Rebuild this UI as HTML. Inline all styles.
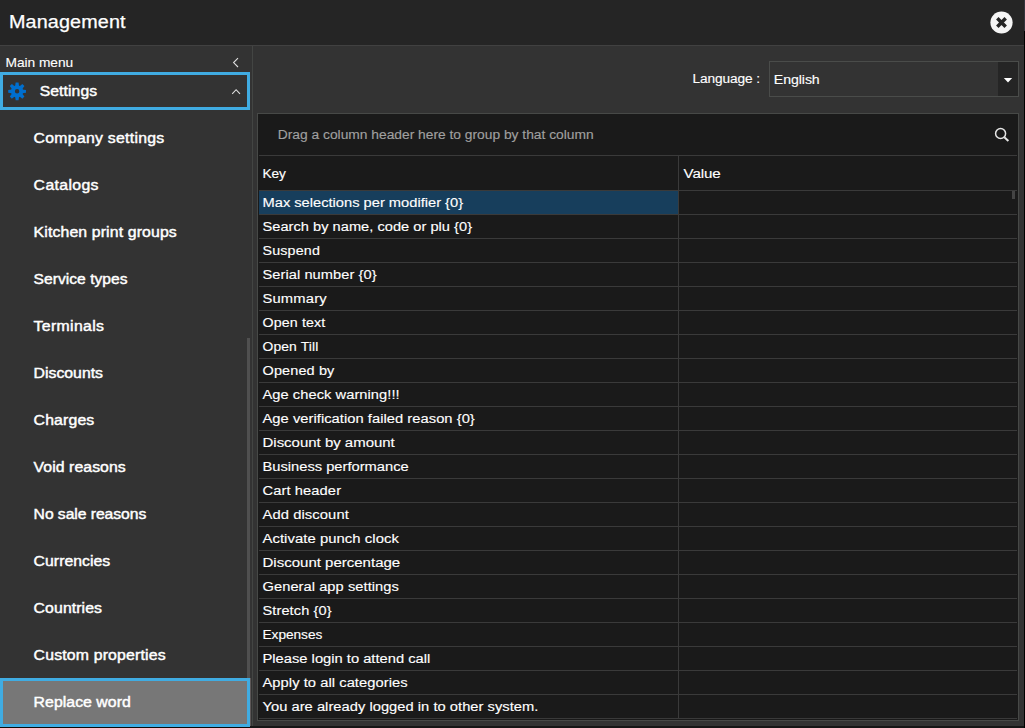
<!DOCTYPE html>
<html lang="en">
<head>
<meta charset="utf-8">
<title>Management</title>
<style>
html,body{margin:0;padding:0;}
body{width:1025px;height:728px;overflow:hidden;background:#333333;position:relative;font-family:"Liberation Sans",sans-serif;}
.abs{position:absolute;}
.t{position:absolute;white-space:nowrap;line-height:20px;height:20px;transform-origin:0 50%;}
#hdr{position:absolute;left:0;top:0;width:1025px;height:45px;background:#252525;}
#hdrline{position:absolute;left:0;top:45px;width:1025px;height:1px;background:#414141;}
#sideline{position:absolute;left:252px;top:46px;width:1px;height:680px;background:#434543;}
#thumb{position:absolute;left:247px;top:338px;width:3px;height:340px;background:#505050;}
#setbox{position:absolute;left:0;top:72px;width:250px;height:38px;box-sizing:border-box;border:3px solid #40ace2;}
#selbox{position:absolute;left:0;top:678px;width:250px;height:49px;box-sizing:border-box;border:3px solid #40ace2;background:#777777;}
#selx{position:absolute;left:250px;top:678px;width:1px;height:48px;background:#5c5757;}
#dd{position:absolute;left:769px;top:61px;width:250px;height:36px;box-sizing:border-box;border:1px solid #4a4c4a;}
#ddbtn{position:absolute;left:998px;top:62px;width:20px;height:34px;background:#252525;}
#grid{position:absolute;left:257px;top:113px;width:762px;height:608px;box-sizing:border-box;border:1px solid #474947;background:#1a1a1a;}
.hl{position:absolute;left:259px;width:758px;height:1px;background:#3a3a3a;}
#vl{position:absolute;left:678px;top:156px;width:1px;height:562px;background:#3a3a3a;}
#selrow{position:absolute;left:259px;top:191px;width:419px;height:23px;background:#173e5c;}
#gthumb{position:absolute;left:1012px;top:191px;width:3px;height:8px;background:#444444;}
#rstrip{position:absolute;left:1024px;top:0;width:1px;height:728px;background:#000;}
#rstrip2{position:absolute;left:1024px;top:0;width:1px;height:31px;background:#34343c;}
#bstrip{position:absolute;left:0;top:726px;width:1025px;height:2px;background:#161616;}
#bstrip2{position:absolute;left:0;top:727px;width:250px;height:1px;background:#120a06;}
svg{position:absolute;overflow:visible;}
</style>
</head>
<body>
<header>
<div id="hdr"></div>
<div id="hdrline"></div>
<!-- close button -->
<svg style="left:990px;top:11.2px" width="23" height="23" viewBox="0 0 23 23">
  <circle cx="11.5" cy="11.5" r="11.1" fill="#f5f5f5"/>
  <path d="M7.3 7.3 L15.7 15.7 M15.7 7.3 L7.3 15.7" stroke="#252525" stroke-width="3.5" fill="none"/>
</svg>
<div class="t" style="left:8px;top:12.14px;font-size:17.5px;font-weight:400;color:#fff;letter-spacing:0.113px;transform:translateX(0.97px) scaleX(1.1300);-webkit-text-stroke:0.25px #fff;">Management</div>
</header>

<div id="bstrip"></div>
<div id="bstrip2"></div>

<aside>
<div id="sideline"></div>
<div id="thumb"></div>
<div id="setbox"></div>
<div id="selbox"></div>
<div id="selx"></div>
<!-- gear -->
<svg style="left:7px;top:81px" width="20" height="20" viewBox="-10 -10 20 20">
  <g transform="translate(0.1 0.35) scale(0.975)">
  <g fill="#006fce">
    <polygon points="-2,-5.2 -1.5,-9.1 1.5,-9.1 2,-5.2" transform="rotate(0)"/>
    <polygon points="-2,-5.2 -1.5,-9.1 1.5,-9.1 2,-5.2" transform="rotate(45)"/>
    <polygon points="-2,-5.2 -1.5,-9.1 1.5,-9.1 2,-5.2" transform="rotate(90)"/>
    <polygon points="-2,-5.2 -1.5,-9.1 1.5,-9.1 2,-5.2" transform="rotate(135)"/>
    <polygon points="-2,-5.2 -1.5,-9.1 1.5,-9.1 2,-5.2" transform="rotate(180)"/>
    <polygon points="-2,-5.2 -1.5,-9.1 1.5,-9.1 2,-5.2" transform="rotate(225)"/>
    <polygon points="-2,-5.2 -1.5,-9.1 1.5,-9.1 2,-5.2" transform="rotate(270)"/>
    <polygon points="-2,-5.2 -1.5,-9.1 1.5,-9.1 2,-5.2" transform="rotate(315)"/>
  </g>
  <circle cx="0" cy="0" r="4.3" fill="none" stroke="#006fce" stroke-width="4"/>
  </g>
</svg>

<!-- chevrons -->
<svg style="left:230px;top:55px" width="12" height="14" viewBox="0 0 12 14">
  <path d="M8 3.2 L3.6 7.6 L8 12" stroke="#e0e0e0" stroke-width="1.1" fill="none"/>
</svg>
<svg style="left:230px;top:86px" width="12" height="12" viewBox="0 0 12 12">
  <path d="M2.2 7.9 L6.1 3.7 L10 7.9" stroke="#e0e0e0" stroke-width="1.1" fill="none"/>
</svg>

<div class="t" style="left:5px;top:52.90px;font-size:12.4px;font-weight:400;color:#fff;letter-spacing:-0.034px;transform:translateX(0.49px) scaleX(1.1092);-webkit-text-stroke:0.1px #fff;">Main menu</div>
<div class="t" style="left:39px;top:80.75px;font-size:14px;font-weight:400;color:#fff;letter-spacing:0.089px;transform:translateX(0.70px) scaleX(1.1209);-webkit-text-stroke:0.42px #fff;">Settings</div>
<div class="t" style="left:33px;top:128.40px;font-size:14px;font-weight:400;color:#fff;letter-spacing:0.238px;transform:translateX(0.60px) scaleX(1.1300);-webkit-text-stroke:0.42px #fff;">Company settings</div>
<div class="t" style="left:33px;top:175.40px;font-size:14px;font-weight:400;color:#fff;letter-spacing:0.311px;transform:translateX(0.60px) scaleX(1.1300);-webkit-text-stroke:0.42px #fff;">Catalogs</div>
<div class="t" style="left:33px;top:222.40px;font-size:14px;font-weight:400;color:#fff;letter-spacing:0.114px;transform:translateX(0.60px) scaleX(1.1300);-webkit-text-stroke:0.42px #fff;">Kitchen print groups</div>
<div class="t" style="left:33px;top:269.40px;font-size:14px;font-weight:400;color:#fff;letter-spacing:0.030px;transform:translateX(0.60px) scaleX(1.1126);-webkit-text-stroke:0.42px #fff;">Service types</div>
<div class="t" style="left:33px;top:316.40px;font-size:14px;font-weight:400;color:#fff;letter-spacing:0.300px;transform:translateX(0.60px) scaleX(1.1300);-webkit-text-stroke:0.42px #fff;">Terminals</div>
<div class="t" style="left:33px;top:363.40px;font-size:14px;font-weight:400;color:#fff;letter-spacing:-0.007px;transform:translateX(0.60px) scaleX(1.1300);-webkit-text-stroke:0.42px #fff;">Discounts</div>
<div class="t" style="left:33px;top:410.40px;font-size:14px;font-weight:400;color:#fff;letter-spacing:0.126px;transform:translateX(0.60px) scaleX(1.1300);-webkit-text-stroke:0.42px #fff;">Charges</div>
<div class="t" style="left:33px;top:457.40px;font-size:14px;font-weight:400;color:#fff;letter-spacing:0.055px;transform:translateX(0.60px) scaleX(1.1300);-webkit-text-stroke:0.42px #fff;">Void reasons</div>
<div class="t" style="left:33px;top:504.40px;font-size:14px;font-weight:400;color:#fff;letter-spacing:-0.046px;transform:translateX(0.60px) scaleX(1.1207);-webkit-text-stroke:0.42px #fff;">No sale reasons</div>
<div class="t" style="left:33px;top:551.40px;font-size:14px;font-weight:400;color:#fff;letter-spacing:0.039px;transform:translateX(0.60px) scaleX(1.1265);-webkit-text-stroke:0.42px #fff;">Currencies</div>
<div class="t" style="left:33px;top:598.40px;font-size:14px;font-weight:400;color:#fff;letter-spacing:0.077px;transform:translateX(0.60px) scaleX(1.1300);-webkit-text-stroke:0.42px #fff;">Countries</div>
<div class="t" style="left:33px;top:645.40px;font-size:14px;font-weight:400;color:#fff;letter-spacing:0.152px;transform:translateX(0.60px) scaleX(1.1300);-webkit-text-stroke:0.42px #fff;">Custom properties</div>
<div class="t" style="left:33px;top:692.40px;font-size:14px;font-weight:400;color:#fff;letter-spacing:0.037px;transform:translateX(0.60px) scaleX(1.1300);-webkit-text-stroke:0.42px #fff;">Replace word</div>
</aside>

<main>
<div id="dd"></div>
<div id="ddbtn"></div>
<!-- dropdown arrow -->
<svg style="left:1003px;top:77px" width="10" height="7" viewBox="0 0 10 7">
  <path d="M0.8 1 L9.2 1 L5 5.6 Z" fill="#ffffff"/>
</svg>

<div id="grid"></div>
<div class="hl" style="top:155px"></div>
<div class="hl" style="top:190px"></div>
<div class="hl" style="top:214px"></div>
<div class="hl" style="top:238px"></div>
<div class="hl" style="top:262px"></div>
<div class="hl" style="top:286px"></div>
<div class="hl" style="top:310px"></div>
<div class="hl" style="top:334px"></div>
<div class="hl" style="top:358px"></div>
<div class="hl" style="top:382px"></div>
<div class="hl" style="top:406px"></div>
<div class="hl" style="top:430px"></div>
<div class="hl" style="top:454px"></div>
<div class="hl" style="top:478px"></div>
<div class="hl" style="top:502px"></div>
<div class="hl" style="top:526px"></div>
<div class="hl" style="top:550px"></div>
<div class="hl" style="top:574px"></div>
<div class="hl" style="top:598px"></div>
<div class="hl" style="top:622px"></div>
<div class="hl" style="top:646px"></div>
<div class="hl" style="top:670px"></div>
<div class="hl" style="top:694px"></div>
<div class="hl" style="top:718px"></div>
<div id="vl"></div>
<div id="selrow"></div>
<div id="gthumb"></div>
<!-- search -->
<svg style="left:993px;top:126px" width="18" height="18" viewBox="0 0 18 18">
  <circle cx="7.6" cy="7.5" r="5" fill="none" stroke="#e6e6e6" stroke-width="1.5"/>
  <path d="M11.3 11.3 L15.4 15" stroke="#e6e6e6" stroke-width="2" fill="none"/>
</svg>

<div class="t" style="left:692px;top:69.20px;font-size:13.7px;font-weight:400;color:#fff;letter-spacing:-0.111px;transform:translateX(0.50px) scaleX(1.0000);-webkit-text-stroke:0.14px #fff;">Language :</div>
<div class="t" style="left:773px;top:70.10px;font-size:13.7px;font-weight:400;color:#fff;letter-spacing:-0.081px;transform:translateX(0.87px) scaleX(1.0328);-webkit-text-stroke:0.14px #fff;">English</div>
<div class="t" style="left:277px;top:125.20px;font-size:13.7px;font-weight:400;color:#a0a0a0;letter-spacing:-0.010px;transform:translateX(0.79px) scaleX(1.0091);-webkit-text-stroke:0.14px #a0a0a0;">Drag a column header here to group by that column</div>
<div class="t" style="left:262px;top:164.20px;font-size:13.7px;font-weight:400;color:#fff;letter-spacing:-0.121px;transform:translateX(0.50px) scaleX(1.0000);-webkit-text-stroke:0.14px #fff;">Key</div>
<div class="t" style="left:683px;top:164.00px;font-size:13.7px;font-weight:400;color:#fff;letter-spacing:-0.113px;transform:translateX(0.60px) scaleX(1.1055);-webkit-text-stroke:0.14px #fff;">Value</div>
<div class="t" style="left:262px;top:193.00px;font-size:13.7px;font-weight:400;color:#fff;letter-spacing:-0.002px;transform:translateX(0.50px) scaleX(1.0719);-webkit-text-stroke:0.14px #fff;">Max selections per modifier {0}</div>
<div class="t" style="left:262px;top:217.00px;font-size:13.7px;font-weight:400;color:#fff;letter-spacing:0.031px;transform:translateX(0.50px) scaleX(1.0664);-webkit-text-stroke:0.14px #fff;">Search by name, code or plu {0}</div>
<div class="t" style="left:262px;top:241.00px;font-size:13.7px;font-weight:400;color:#fff;letter-spacing:0.160px;transform:translateX(0.50px) scaleX(1.0436);-webkit-text-stroke:0.14px #fff;">Suspend</div>
<div class="t" style="left:262px;top:265.00px;font-size:13.7px;font-weight:400;color:#fff;letter-spacing:0.058px;transform:translateX(0.50px) scaleX(1.0688);-webkit-text-stroke:0.14px #fff;">Serial number {0}</div>
<div class="t" style="left:262px;top:289.00px;font-size:13.7px;font-weight:400;color:#fff;letter-spacing:0.155px;transform:translateX(0.50px) scaleX(1.0772);-webkit-text-stroke:0.14px #fff;">Summary</div>
<div class="t" style="left:262px;top:313.00px;font-size:13.7px;font-weight:400;color:#fff;letter-spacing:0.120px;transform:translateX(0.50px) scaleX(1.0412);-webkit-text-stroke:0.14px #fff;">Open text</div>
<div class="t" style="left:262px;top:337.00px;font-size:13.7px;font-weight:400;color:#fff;letter-spacing:0.123px;transform:translateX(0.50px) scaleX(1.0144);-webkit-text-stroke:0.14px #fff;">Open Till</div>
<div class="t" style="left:262px;top:361.00px;font-size:13.7px;font-weight:400;color:#fff;letter-spacing:0.118px;transform:translateX(0.50px) scaleX(1.0578);-webkit-text-stroke:0.14px #fff;">Opened by</div>
<div class="t" style="left:262px;top:385.00px;font-size:13.7px;font-weight:400;color:#fff;letter-spacing:0.049px;transform:translateX(0.50px) scaleX(1.0713);-webkit-text-stroke:0.14px #fff;">Age check warning!!!</div>
<div class="t" style="left:262px;top:409.00px;font-size:13.7px;font-weight:400;color:#fff;letter-spacing:0.028px;transform:translateX(0.50px) scaleX(1.0763);-webkit-text-stroke:0.14px #fff;">Age verification failed reason {0}</div>
<div class="t" style="left:262px;top:433.00px;font-size:13.7px;font-weight:400;color:#fff;letter-spacing:-0.005px;transform:translateX(0.50px) scaleX(1.0943);-webkit-text-stroke:0.14px #fff;">Discount by amount</div>
<div class="t" style="left:262px;top:457.00px;font-size:13.7px;font-weight:400;color:#fff;letter-spacing:-0.004px;transform:translateX(0.50px) scaleX(1.0738);-webkit-text-stroke:0.14px #fff;">Business performance</div>
<div class="t" style="left:262px;top:481.00px;font-size:13.7px;font-weight:400;color:#fff;letter-spacing:0.093px;transform:translateX(0.50px) scaleX(1.0726);-webkit-text-stroke:0.14px #fff;">Cart header</div>
<div class="t" style="left:262px;top:505.00px;font-size:13.7px;font-weight:400;color:#fff;letter-spacing:0.084px;transform:translateX(0.50px) scaleX(1.0777);-webkit-text-stroke:0.14px #fff;">Add discount</div>
<div class="t" style="left:262px;top:529.00px;font-size:13.7px;font-weight:400;color:#fff;letter-spacing:0.049px;transform:translateX(0.50px) scaleX(1.0846);-webkit-text-stroke:0.14px #fff;">Activate punch clock</div>
<div class="t" style="left:262px;top:553.00px;font-size:13.7px;font-weight:400;color:#fff;letter-spacing:-0.005px;transform:translateX(0.50px) scaleX(1.0974);-webkit-text-stroke:0.14px #fff;">Discount percentage</div>
<div class="t" style="left:262px;top:577.00px;font-size:13.7px;font-weight:400;color:#fff;letter-spacing:0.049px;transform:translateX(0.50px) scaleX(1.0714);-webkit-text-stroke:0.14px #fff;">General app settings</div>
<div class="t" style="left:262px;top:601.00px;font-size:13.7px;font-weight:400;color:#fff;letter-spacing:0.094px;transform:translateX(0.50px) scaleX(1.0645);-webkit-text-stroke:0.14px #fff;">Stretch {0}</div>
<div class="t" style="left:262px;top:625.00px;font-size:13.7px;font-weight:400;color:#fff;letter-spacing:-0.038px;transform:translateX(0.50px) scaleX(1.0000);-webkit-text-stroke:0.14px #fff;">Expenses</div>
<div class="t" style="left:262px;top:649.00px;font-size:13.7px;font-weight:400;color:#fff;letter-spacing:-0.003px;transform:translateX(0.50px) scaleX(1.0762);-webkit-text-stroke:0.14px #fff;">Please login to attend call</div>
<div class="t" style="left:262px;top:673.00px;font-size:13.7px;font-weight:400;color:#fff;letter-spacing:0.042px;transform:translateX(0.50px) scaleX(1.0760);-webkit-text-stroke:0.14px #fff;">Apply to all categories</div>
<div class="t" style="left:262px;top:697.00px;font-size:13.7px;font-weight:400;color:#fff;letter-spacing:0.023px;transform:translateX(0.50px) scaleX(1.0741);-webkit-text-stroke:0.14px #fff;">You are already logged in to other system.</div>
</main>

<div id="rstrip"></div>
<div id="rstrip2"></div>
</body>
</html>
